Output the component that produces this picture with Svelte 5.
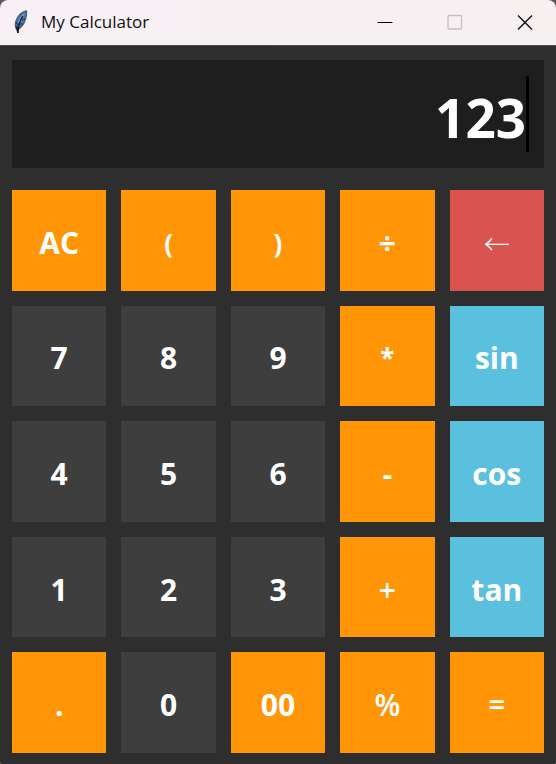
<script>
  const keys = [
    ['AC', 'op'], ['(', 'op small'], [')', 'op small'], ['÷', 'op'], ['←', 'back'],
    ['7', 'num'], ['8', 'num'], ['9', 'num'], ['*', 'op small'], ['sin', 'fn'],
    ['4', 'num'], ['5', 'num'], ['6', 'num'], ['-', 'op'], ['cos', 'fn'],
    ['1', 'num'], ['2', 'num'], ['3', 'num'], ['+', 'op light'], ['tan', 'fn'],
    ['.', 'op'], ['0', 'num'], ['00', 'op'], ['%', 'op light'], ['=', 'op light'],
  ];

  let value = $state('123');

  function evaluate(text) {
    const source = text
      .replace(/÷/g, '/')
      .replace(/%/g, '/100')
      .replace(/(sin|cos|tan)/g, 'Math.$1');
    try {
      return String(new Function(`return ${source}`)());
    } catch {
      return 'Error';
    }
  }

  function press(key) {
    if (key === 'AC') value = '';
    else if (key === '←') value = value.slice(0, -1);
    else if (key === '=') value = evaluate(value);
    else if (['sin', 'cos', 'tan'].includes(key)) value += `${key}(`;
    else value += key;
  }
</script>

<div class="window">
  <header>
    <svg class="feather" viewBox="0 0 16 26" aria-hidden="true">
      <path d="M13.4 2 C9 3 5 7 3 12 C2 15 2 18 4 21 C8 19 11 15 12.5 10 C13.3 7 13.7 4 13.4 2Z" fill="#3f7cc4" stroke="#5a5c62" stroke-width="1.4" />
      <path d="M11.8 4 C8.5 6 6 9 5 13 L7 15 C9 12 11 8 11.8 4Z" fill="#69a7ec" />
      <path d="M3 13 L5 16 M3 17 L5 19 M12 10 L9 11 M10 15 L7 15" stroke="#253750" stroke-width="1.2" fill="none" />
      <path d="M10 7 C7 11 5.5 15 4.8 24" fill="none" stroke="#16191f" stroke-width="1.3" />
      <path d="M4 18 L5 24" fill="none" stroke="#16191f" stroke-width="1.6" />
    </svg>
    <h1>My Calculator</h1>
    <div class="controls">
      <button aria-label="Minimize">
        <svg viewBox="0 0 16 16"><path d="M0.5 8.5H15.5" stroke="#000" /></svg>
      </button>
      <button aria-label="Maximize" disabled>
        <svg viewBox="0 0 16 16"><rect x="1" y="1.5" width="13.5" height="13.5" rx="1" stroke="#c5c0c1" stroke-width="1.3" fill="none" /></svg>
      </button>
      <button aria-label="Close">
        <svg viewBox="0 0 16 16"><path d="M1 1.5L15 15.5M15 1.5L1 15.5" stroke="#111" stroke-width="1.4" /></svg>
      </button>
    </div>
  </header>

  <main>
    <div class="display">
      <input type="text" aria-label="Expression" bind:value />
      <span class="caret"></span>
    </div>
    <div class="keys">
      {#each keys as [label, kind]}
        <button class="key {kind}" onclick={() => press(label)}>{label}</button>
      {/each}
    </div>
  </main>
</div>

<style>
  :global(body) {
    margin: 0;
    background: #5a5858;
  }

  .window {
    display: flex;
    flex-direction: column;
    min-height: 100vh;
    border-radius: 8px 8px 3px 3px;
    overflow: hidden;
    background: #2e2e2e;
    font-family: "Open Sans", "Noto Sans", sans-serif;
  }

  header {
    display: flex;
    align-items: center;
    height: 45px;
    box-sizing: border-box;
    padding: 0 0 2px 13px;
    background: linear-gradient(90deg, #f7f0f5, #f6f0f1);
  }

  .feather {
    width: 16px;
    height: 26px;
    margin-right: 12px;
  }

  h1 {
    flex: 1;
    margin: 0;
    font-size: 17px;
    font-weight: 400;
    line-height: 24px;
    color: #111;
  }

  .controls {
    display: flex;
    align-self: stretch;
    margin-right: -4px;
  }

  .controls button {
    display: flex;
    align-items: center;
    justify-content: center;
    width: 70px;
    padding: 0;
    border: 0;
    background: none;
  }

  .controls svg {
    width: 16px;
    height: 16px;
  }

  main {
    flex: 1;
    display: flex;
    flex-direction: column;
    gap: 22px;
    padding: 14px 12px 11px;
    border-top: 1px solid #4b4a4b;
  }

  .display {
    display: flex;
    align-items: center;
    height: 108px;
    box-sizing: border-box;
    padding: 0 15px;
    background: #1e1e1e;
  }

  input {
    flex: 1;
    min-width: 0;
    height: 76px;
    box-sizing: border-box;
    padding: 6px 0 0;
    border: 0;
    outline: none;
    background: none;
    color: #fff;
    font: 700 53px/70px "Open Sans", "Noto Sans", sans-serif;
    text-align: right;
  }

  .caret {
    width: 3px;
    height: 76px;
    background: #000;
  }

  .keys {
    flex: 1;
    display: grid;
    grid-template-columns: repeat(5, 1fr);
    grid-auto-rows: 1fr;
    gap: 15px;
  }

  .key {
    min-width: 0;
    padding: 5px 0 0;
    border: 0;
    color: #fff;
    font: 700 30px/40px "Open Sans", "Noto Sans", sans-serif;
  }

  .light {
    font-weight: 600;
  }

  .small {
    font-size: 26px;
  }

  .op {
    background: #ff9507;
  }

  .num {
    background: #3e3e3e;
  }

  .fn {
    background: #5bc0de;
  }

  .back {
    background: #d9534f;
    font-family: "Noto Sans CJK JP", sans-serif;
    font-size: 26px;
    font-weight: 300;
  }
</style>
